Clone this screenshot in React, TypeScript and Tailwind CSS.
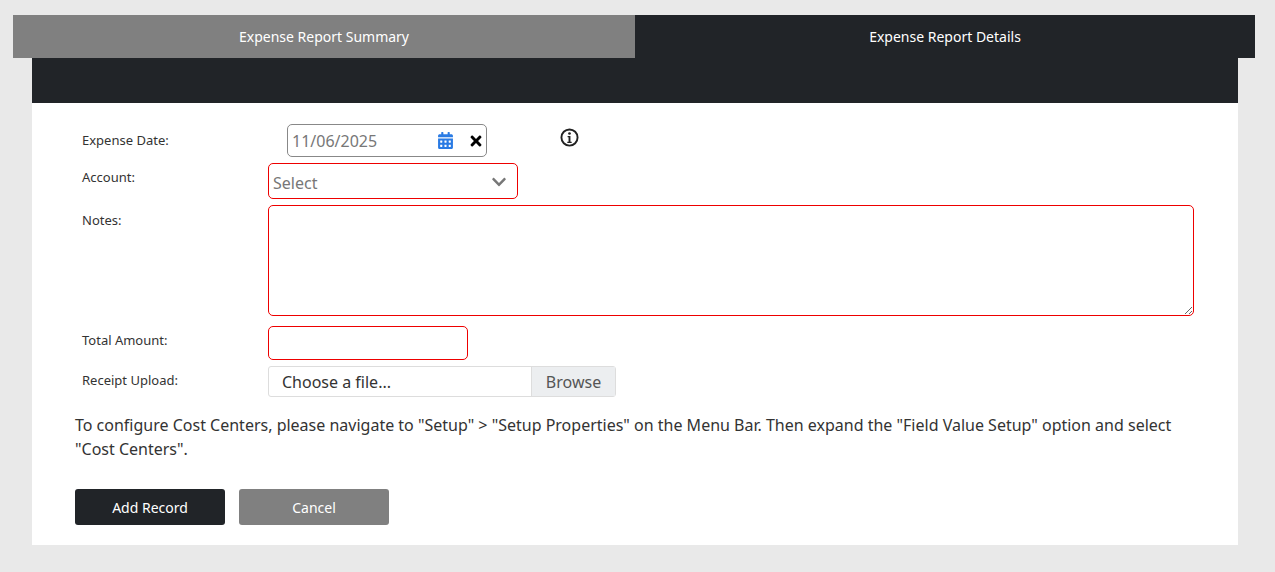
import { FaCalendarAlt, FaTimes, FaChevronDown } from "react-icons/fa";

export default function App() {
  const label = "text-[13px] text-[#333] w-[186px] shrink-0";
  return (
    <div className="min-h-[572px] bg-[#e9e9e9] pt-[15px] font-['Lato','Liberation_Sans',sans-serif]">
      <div className="mx-[13px] mr-[20px] flex h-[43px] text-[14px] text-white">
        <div className="flex w-[622px] items-center justify-center bg-[#808080]">Expense Report Summary</div>
        <div className="flex flex-1 items-center justify-center bg-[#212428]">Expense Report Details</div>
      </div>
      <div className="mx-[32px] mr-[37px]">
        <div className="h-[45px] bg-[#212428]" />
        <div className="bg-white pb-[20px] pt-[21px]">
          <div className="pl-[50px]">
            <div className="flex h-[33px] items-start">
              <div className={label + " pt-[7px]"}>Expense Date:</div>
              <div className="ml-[19px] flex h-[33px] w-[200px] items-center rounded-[5px] border border-[#888] pl-[4px] pr-[2px] text-[16px] text-[#777]">
                <span className="flex-1">11/06/2025</span>
                <FaCalendarAlt className="mr-[14px] text-[17px] text-[#2a7be4]" />
                <FaTimes className="text-[16px] text-black" />
              </div>
              <svg className="ml-[73px] mt-[4px]" width="19" height="19" viewBox="0 0 20 20">
                <circle cx="10" cy="10" r="8.5" fill="none" stroke="#222" strokeWidth="2" />
                <circle cx="10" cy="5.8" r="1.4" fill="#222" />
                <path d="M8 8.5h3v6h1.3v1.3H7.7v-1.3H9v-4.7H8z" fill="#222" />
              </svg>
            </div>
            <div className="mt-[6px] flex h-[36px] items-start">
              <div className={label + " pt-[5px]"}>Account:</div>
              <div className="flex h-[36px] w-[250px] items-center rounded-[5px] border border-[#e00] pl-[4px] pr-[10px] text-[16px] text-[#777]">
                <span className="mt-[4px] flex-1">Select</span>
                <FaChevronDown className="mt-[2px] text-[16px] text-[#777]" />
              </div>
            </div>
            <div className="mt-[6px] flex items-start">
              <div className={label + " pt-[6px]"}>Notes:</div>
              <textarea className="h-[111px] w-[926px] rounded-[5px] border border-[#e00]" />
            </div>
            <div className="mt-[10px] flex items-start">
              <div className={label + " pt-[5px]"}>Total Amount:</div>
              <div className="h-[34px] w-[200px] rounded-[5px] border border-[#e00]" />
            </div>
            <div className="mt-[6px] flex items-start">
              <div className={label + " pt-[5px]"}>Receipt Upload:</div>
              <div className="flex h-[31px] w-[348px] rounded-[3px] border border-[#ddd] text-[16px] text-[#333]">
                <span className="flex flex-1 items-center pl-[13px]">Choose a file...</span>
                <span className="flex w-[84px] items-center justify-center border-l border-[#ddd] bg-[#eceef0] text-[#555]">Browse</span>
              </div>
            </div>
          </div>
          <p className="mt-[16px] pl-[43px] pr-[60px] text-[16px] leading-[24px] text-[#333]">
            To configure Cost Centers, please navigate to "Setup" &gt; "Setup Properties" on the Menu Bar. Then expand the "Field Value Setup" option and select "Cost Centers".
          </p>
          <div className="mt-[28px] flex gap-[14px] pl-[43px] text-[14px] text-white">
            <button className="h-[36px] w-[150px] rounded-[3px] bg-[#212428]">Add Record</button>
            <button className="h-[36px] w-[150px] rounded-[3px] bg-[#808080]">Cancel</button>
          </div>
        </div>
      </div>
    </div>
  );
}
